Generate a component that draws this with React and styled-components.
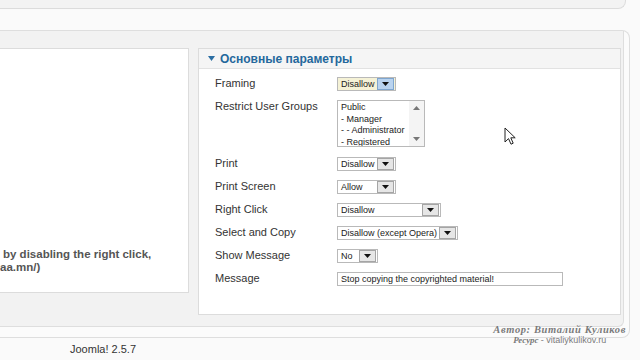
import React from 'react';
import styled, { createGlobalStyle } from 'styled-components';

const GlobalStyle = createGlobalStyle`
    html, body {
        margin: 0;
        padding: 0;
        background: #fafafa;
    }
    body {
        font-family: "Liberation Sans", Arial, sans-serif;
    }
`

const rows = [
    { label: 'Framing', value: 'Disallow', width: 59, focused: true },
    { label: 'Restrict User Groups', list: ['Public', '- Manager', '- - Administrator', '- Registered'] },
    { label: 'Print', value: 'Disallow', width: 59 },
    { label: 'Print Screen', value: 'Allow', width: 59 },
    { label: 'Right Click', value: 'Disallow', width: 104 },
    { label: 'Select and Copy', value: 'Disallow (except Opera)', width: 121 },
    { label: 'Show Message', value: 'No', width: 41 },
    { label: 'Message', input: 'Stop copying the copyrighted material!' },
];

const Select = ({ value, width, focused }) => (
    <StyledSelect width={width} focused={focused}>
        <StyledSelectText>{value}</StyledSelectText>
        <StyledSelectButton focused={focused}>
            <svg width="7" height="4" viewBox="0 0 7 4"><path d="M0 0 H7 L3.5 4 Z" fill="#111"/></svg>
        </StyledSelectButton>
    </StyledSelect>
);

const ListBox = ({ items }) => (
    <StyledListBox>
        <StyledListItems>
            {items.map(i => <StyledListItem key={i}>{i}</StyledListItem>)}
        </StyledListItems>
        <StyledScrollBar>
            <svg width="7" height="4" viewBox="0 0 7 4"><path d="M0 4 H7 L3.5 0 Z" fill="#777"/></svg>
            <svg width="7" height="4" viewBox="0 0 7 4"><path d="M0 0 H7 L3.5 4 Z" fill="#777"/></svg>
        </StyledScrollBar>
    </StyledListBox>
);

const App = () => (
    <StyledPage>
        <GlobalStyle/>
        <StyledTopBox/>
        <StyledOuterPanel>
            <StyledInnerPanel>
                <StyledInfoBox>
                    <StyledInfoText>by disabling the right click,</StyledInfoText>
                    <StyledInfoText cut>aa.mn/)</StyledInfoText>
                </StyledInfoBox>
                <StyledFieldset>
                    <StyledLegend>
                        <svg width="7" height="5" viewBox="0 0 7 5"><path d="M0 0 H7 L3.5 5 Z" fill="#2b6ea3"/></svg>
                        Основные параметры
                    </StyledLegend>
                    <StyledParams>
                        {rows.map(r => (
                            <StyledParamRow key={r.label} tall={!!r.list}>
                                <StyledLabel>{r.label}</StyledLabel>
                                {r.list && <ListBox items={r.list}/>}
                                {r.value && <Select value={r.value} width={r.width} focused={r.focused}/>}
                                {r.input && <StyledTextInput>{r.input}</StyledTextInput>}
                            </StyledParamRow>
                        ))}
                    </StyledParams>
                </StyledFieldset>
            </StyledInnerPanel>
        </StyledOuterPanel>
        <StyledFooter>Joomla! 2.5.7</StyledFooter>
        <StyledWatermark>
            <StyledWatermarkLine>Автор: Виталий Куликов</StyledWatermarkLine>
            <StyledWatermarkLine small>Ресурс <span>- vitaliykulikov.ru</span></StyledWatermarkLine>
        </StyledWatermark>
        <StyledCursor width="13" height="19" viewBox="0 0 13 19">
            <path d="M1 1 L1 15 L4.5 11.6 L7 17.2 L9.2 16.2 L6.8 10.8 L11.2 10.8 Z" fill="#fff" stroke="#222" strokeWidth="1" strokeLinejoin="round"/>
        </StyledCursor>
    </StyledPage>
);

const StyledPage = styled.div`
    position: relative;
    width: 640px;
    height: 360px;
    overflow: hidden;
    background: #fafafa;
`

const StyledTopBox = styled.div`
    height: 8px;
    margin-right: 14px;
    background: #f3f3f3;
    border-right: 1px solid #dcdcdc;
    border-bottom: 1px solid #dcdcdc;
    border-radius: 0 0 8px 0;
`

const StyledOuterPanel = styled.div`
    margin-top: 21px;
    margin-right: 10px;
    height: 296px;
    padding: 0 5px 10px 0;
    background: #fbfbfb;
    border: 1px solid #dedede;
    border-left: none;
    border-radius: 0 8px 8px 0;
`

const StyledInnerPanel = styled.div`
    display: flex;
    align-items: flex-start;
    gap: 9px;
    height: 278px;
    padding: 17px 2px 0 0;
    background: #f2f2f2;
    border-right: 1px solid #dedede;
    border-bottom: 1px solid #dedede;
    border-radius: 0 0 6px 0;
`

const StyledInfoBox = styled.div`
    display: flex;
    flex-direction: column;
    justify-content: flex-end;
    width: 188px;
    height: 225px;
    padding-bottom: 18px;
    background: #fff;
    border: 1px solid #dcdcdc;
    border-left: none;
`

const StyledInfoText = styled.div`
    font-size: 11.5px;
    font-weight: bold;
    line-height: 13px;
    color: #555;
    white-space: nowrap;
    margin-left: ${p => (p.cut ? '0' : '3px')};
`

const StyledFieldset = styled.div`
    flex: 1;
    height: 265px;
    background: #fff;
    border: 1px solid #dcdcdc;
`

const StyledLegend = styled.div`
    display: flex;
    align-items: center;
    gap: 5px;
    height: 19px;
    padding-left: 9px;
    background: #f5f5f5;
    border-bottom: 1px solid #e2e2e2;
    font-size: 12px;
    font-weight: bold;
    color: #24689c;
`

const StyledParams = styled.div`
    display: flex;
    flex-direction: column;
    padding: 3px 0 0 16px;
`

const StyledParamRow = styled.div`
    display: flex;
    align-items: ${p => (p.tall ? 'flex-start' : 'center')};
    height: ${p => (p.tall ? '57px' : '23px')};
    padding-top: ${p => (p.tall ? '5px' : '0')};
    box-sizing: border-box;
`

const StyledLabel = styled.div`
    width: 122px;
    flex-shrink: 0;
    font-size: 11px;
    line-height: 13px;
    color: #333;
`

const StyledSelect = styled.div`
    display: flex;
    align-items: center;
    width: ${p => p.width}px;
    height: 14px;
    box-sizing: border-box;
    border: 1px solid #b9b9b9;
    background: ${p => (p.focused ? '#f5f2d6' : '#fff')};
`

const StyledSelectText = styled.div`
    flex: 1;
    padding-left: 3px;
    font-size: 9px;
    line-height: 12px;
    color: #222;
    white-space: nowrap;
`

const StyledSelectButton = styled.div`
    display: flex;
    align-items: center;
    justify-content: center;
    width: 15px;
    height: 10px;
    margin-right: 1px;
    border: 1px solid ${p => (p.focused ? '#7fa6cf' : '#a5a5a5')};
    background: ${p => (p.focused ? '#b9d3ef' : '#e6e6e6')};
`

const StyledListBox = styled.div`
    display: flex;
    width: 88px;
    height: 47px;
    box-sizing: border-box;
    border: 1px solid #b9b9b9;
    background: #fff;
`

const StyledListItems = styled.div`
    flex: 1;
    padding: 1px 0 0 3px;
    overflow: hidden;
`

const StyledListItem = styled.div`
    font-size: 9px;
    line-height: 11.5px;
    color: #222;
    white-space: nowrap;
`

const StyledScrollBar = styled.div`
    display: flex;
    flex-direction: column;
    justify-content: space-between;
    align-items: center;
    width: 15px;
    padding: 5px 0;
    background: #f4f4f4;
`

const StyledTextInput = styled.div`
    width: 226px;
    height: 14px;
    box-sizing: border-box;
    padding-left: 3px;
    border: 1px solid #b9b9b9;
    font-size: 9px;
    line-height: 12px;
    color: #222;
    white-space: nowrap;
`

const StyledFooter = styled.div`
    padding: 5px 0 0 70px;
    font-size: 11px;
    color: #333;
`

const StyledWatermark = styled.div`
    position: absolute;
    right: 14px;
    top: 324px;
    text-align: center;
    color: #7a7a7a;
    text-shadow: 0 0 1px #fff;
`

const StyledWatermarkLine = styled.div`
    font-family: "Liberation Serif", "Times New Roman", serif;
    font-style: italic;
    font-weight: bold;
    font-size: ${p => (p.small ? '9px' : '10.5px')};
    line-height: ${p => (p.small ? '10px' : '11px')};
    letter-spacing: ${p => (p.small ? '0' : '0.6px')};

    span {
        font-family: "Liberation Sans", Arial, sans-serif;
        font-style: normal;
        font-weight: normal;
    }
`

const StyledCursor = styled.svg`
    position: absolute;
    left: 504px;
    top: 127px;
`

export default App;
